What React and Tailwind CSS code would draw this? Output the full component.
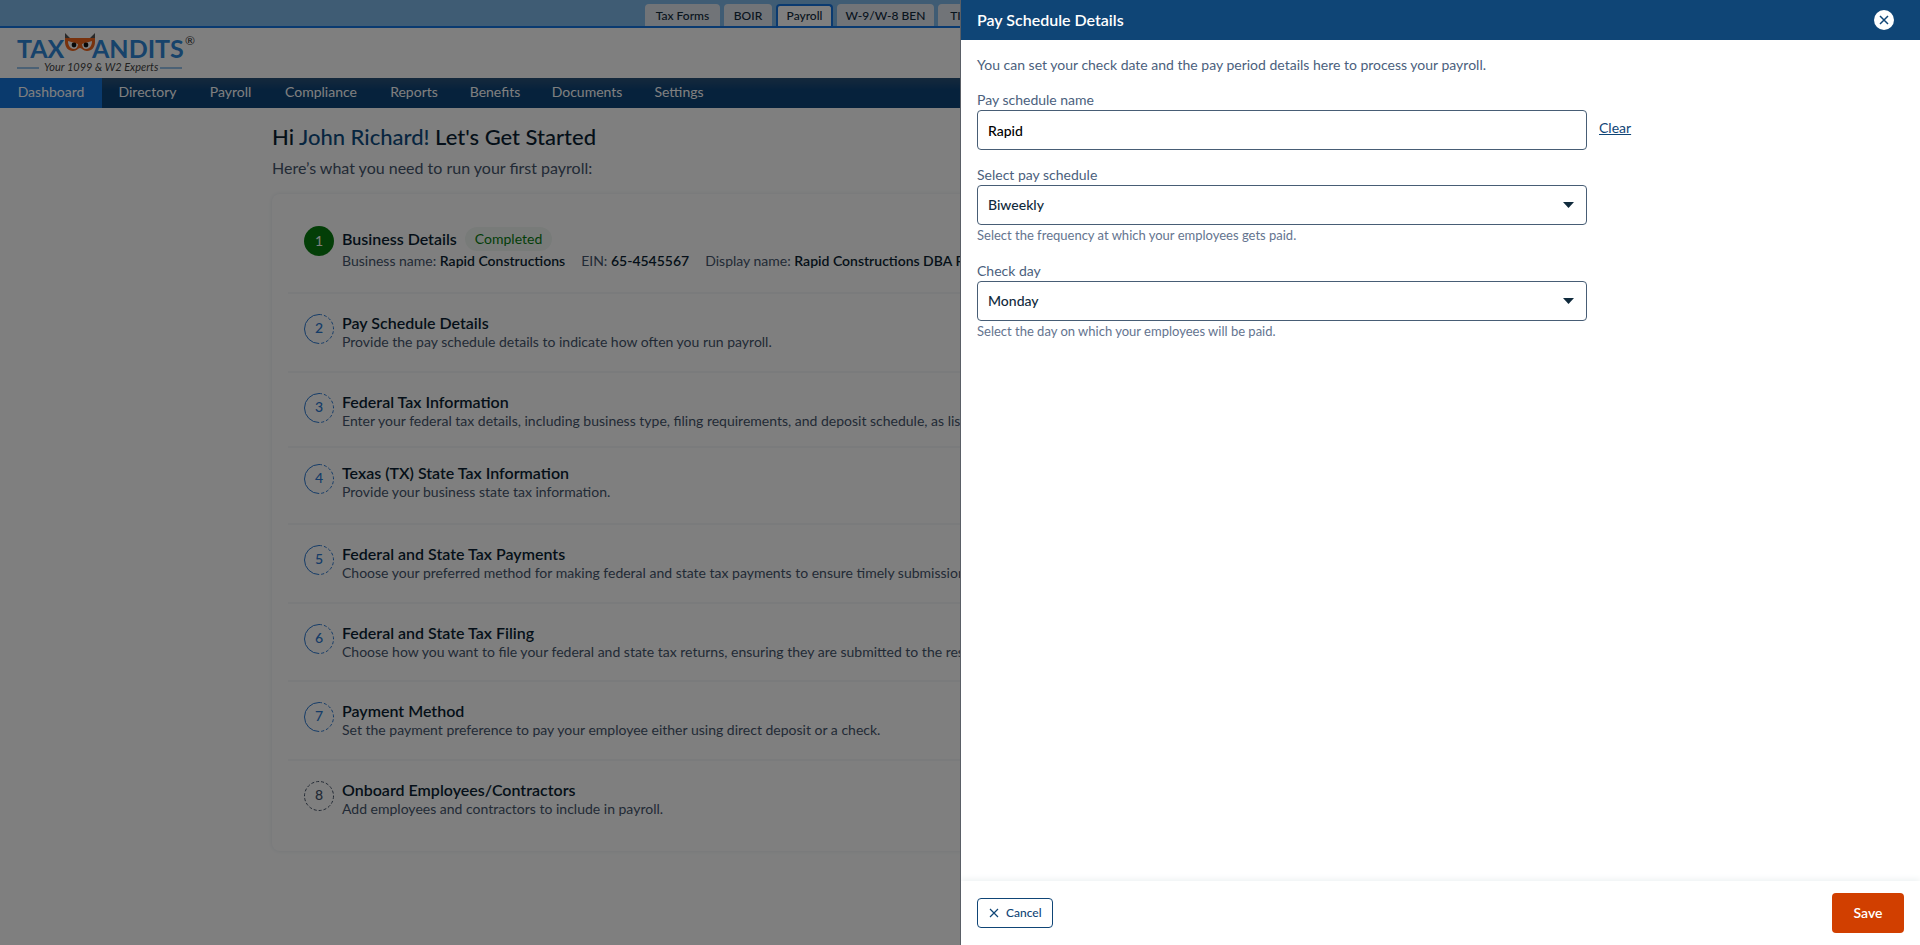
import { useState } from 'react';

const TABS = [
  { name: 'Tax Forms', width: 'w-[75px]' },
  { name: 'BOIR', width: 'w-12' },
  { name: 'Payroll', width: 'w-[57px]', active: true },
  { name: 'W-9/W-8 BEN', width: 'w-[97px]' },
  { name: 'TIN', width: 'w-11' },
];

const NAV = [
  { name: 'Dashboard', width: 'w-[102px]', active: true },
  { name: 'Directory', width: 'w-[91px]' },
  { name: 'Payroll', width: 'w-[75px]' },
  { name: 'Compliance', width: 'w-[106px]' },
  { name: 'Reports', width: 'w-20' },
  { name: 'Benefits', width: 'w-[82px]' },
  { name: 'Documents', width: 'w-[102px]' },
  { name: 'Settings', width: 'w-[82px]' },
];

const STEPS = [
  {
    title: 'Pay Schedule Details',
    text: 'Provide the pay schedule details to indicate how often you run payroll.',
    row: 'h-[79px] pt-5',
  },
  {
    title: 'Federal Tax Information',
    text: 'Enter your federal tax details, including business type, filing requirements, and deposit schedule, as listed',
    row: 'h-[75px] pt-5',
  },
  {
    title: 'Texas (TX) State Tax Information',
    text: 'Provide your business state tax information.',
    row: 'h-[77px] pt-4',
  },
  {
    title: 'Federal and State Tax Payments',
    text: 'Choose your preferred method for making federal and state tax payments to ensure timely submission.',
    row: 'h-[79px] pt-5',
  },
  {
    title: 'Federal and State Tax Filing',
    text: 'Choose how you want to file your federal and state tax returns, ensuring they are submitted to the respective',
    row: 'h-[78px] pt-5',
  },
  {
    title: 'Payment Method',
    text: 'Set the payment preference to pay your employee either using direct deposit or a check.',
    row: 'h-[79px] pt-5',
  },
  {
    title: 'Onboard Employees/Contractors',
    text: 'Add employees and contractors to include in payroll.',
    row: 'h-[90px] pt-5',
    muted: true,
  },
];

function Logo() {
  return (
    <svg width="188" height="44" viewBox="0 0 188 44" role="img" aria-label="TaxBandits">
      <g fill="#2f86d6" fontFamily="Lato, sans-serif" fontWeight="700" fontSize="25">
        <text x="1" y="26">TAX</text>
        <text x="76" y="26">ANDITS</text>
      </g>
      <path d="M49 1l5 5h-5zM79 1l-5 5h5z" fill="#555" />
      <path
        d="M49 6h30v4c0 5-3 9-8 9-4 0-5-3-7-3s-3 3-7 3c-5 0-8-4-8-9z"
        fill="#f0641b"
      />
      <path
        d="M52 9l10 3c0 3-2 5-4 5-4 0-6-4-6-8zM76 9l-10 3c0 3 2 5 4 5 4 0 6-4 6-8z"
        fill="#fff"
      />
      <circle cx="58" cy="13" r="2.4" fill="#111" />
      <circle cx="70" cy="13" r="2.4" fill="#111" />
      <text x="169" y="13" fill="#333" fontFamily="Lato, sans-serif" fontSize="12">®</text>
      <path d="M1 36h22M144 36h22" stroke="#2f86d6" />
      <text x="28" y="39" fill="#444" fontFamily="Lato, sans-serif" fontStyle="italic" fontSize="11">
        Your 1099 &amp; W2 Experts
      </text>
    </svg>
  );
}

function StepCircle({ number, muted }) {
  const color = muted ? '#475569' : '#2b78d0';
  return (
    <div className="relative size-[30px] shrink-0">
      <svg viewBox="0 0 30 30" className="size-full" fill="none" stroke={color}>
        {muted ? (
          <circle cx="15" cy="15" r="14.5" strokeDasharray="3 2" />
        ) : (
          <>
            <path d="M15 29.5a14.5 14.5 0 0 1 0-29" />
            <path d="M15 .5a14.5 14.5 0 0 1 0 29" strokeDasharray="3 2" />
          </>
        )}
      </svg>
      <span
        className={`absolute inset-0 text-center text-sm font-medium leading-7 ${muted ? 'text-slate-600' : 'text-[#2b78d0]'}`}
      >
        {number}
      </span>
    </div>
  );
}

function SelectField({ id, label, help, options }) {
  return (
    <div>
      <label htmlFor={id} className="block text-sm leading-5 text-[#4b5f7d]">
        {label}
      </label>
      <div className="relative">
        <select
          id={id}
          className="block h-10 w-full appearance-none rounded border border-[#475d75] bg-white px-2.5 text-sm font-medium text-[#102a3c]"
        >
          {options.map((o) => (
            <option key={o}>{o}</option>
          ))}
        </select>
        <svg
          viewBox="0 0 11 6"
          className="pointer-events-none absolute right-[13px] top-[17px] h-1.5 w-[11px]"
          fill="#102a3c"
        >
          <path d="M0 0h11L5.5 6z" />
        </svg>
      </div>
      <p className="text-[13px] leading-5 text-[#64748f]">{help}</p>
    </div>
  );
}

function Dashboard() {
  return (
    <div className="bg-white">
      <div className="h-7 overflow-hidden border-b-2 border-[#1574e0] bg-[#7eb8e8]">
        <nav className="ml-[645px] flex h-7 gap-1 pt-1">
          {TABS.map((t) => (
            <a
              key={t.name}
              href="#"
              className={`shrink-0 rounded-t text-center text-xs font-medium text-[#102a3c] ${t.width} ${
                t.active ? 'border-2 border-b-0 border-[#1574e0] bg-white leading-5' : 'h-[22px] bg-[#e3e9f1] leading-6'
              }`}
            >
              {t.name}
            </a>
          ))}
        </nav>
      </div>

      <header className="flex h-[50px] items-start px-4 pt-1">
        <Logo />
      </header>

      <nav className="flex h-[30px] bg-linear-to-b from-[#2a5278] from-0% to-[#0c4478] to-40%">
        {NAV.map((item) => (
          <a
            key={item.name}
            href="#"
            className={`text-center text-sm leading-7 text-white ${item.width} ${item.active ? 'bg-[#1574da]' : ''}`}
          >
            {item.name}
          </a>
        ))}
      </nav>

      <main className="mx-auto max-w-[1376px] pt-[15px]">
        <h1 className="text-[22px] font-medium leading-7 text-[#0b1f33]">
          Hi <span className="text-[#0f4c81]">John Richard!</span> Let's Get Started
        </h1>
        <p className="mt-[5px] text-base leading-6 text-slate-600">
          Here’s what you need to run your first payroll:
        </p>

        <section className="mt-3.5 rounded-lg px-4 shadow-[0_0_5px_#e6ebef]">
          <div className="flex h-[100px] gap-2 border-b-2 border-[#f4f7f9] px-4 pt-8">
            <div className="size-[30px] shrink-0 rounded-full bg-[#077d0f] text-center text-sm leading-[30px] text-white">
              1
            </div>
            <div className="pt-px">
              <div className="flex items-center gap-2">
                <h2 className="text-base font-semibold leading-6 text-[#0b1f33]">Business Details</h2>
                <span className="rounded-full bg-[#f1f7f3] px-2.5 text-sm leading-6 text-[#077d0f]">Completed</span>
              </div>
              <div className="flex gap-4 whitespace-nowrap text-sm leading-5 text-slate-600">
                <p>
                  Business name: <b className="font-semibold text-[#0b1f33]">Rapid Constructions</b>
                </p>
                <p>
                  EIN: <b className="font-semibold text-[#0b1f33]">65-4545567</b>
                </p>
                <p>
                  Display name: <b className="font-semibold text-[#0b1f33]">Rapid Constructions DBA Rapid</b>
                </p>
              </div>
            </div>
          </div>

          {STEPS.map((s, i) => (
            <div
              key={s.title}
              className={`flex gap-2 px-4 ${s.row} ${i < STEPS.length - 1 ? 'border-b-2 border-[#f4f7f9]' : ''}`}
            >
              <StepCircle number={i + 2} muted={s.muted} />
              <div>
                <h2 className="text-base font-semibold leading-[18px] text-[#0b1f33]">{s.title}</h2>
                <p className="text-sm leading-5 text-slate-600">{s.text}</p>
              </div>
            </div>
          ))}
        </section>
      </main>
    </div>
  );
}

function PayScheduleDrawer() {
  const [name, setName] = useState('Rapid');

  return (
    <aside className="flex h-full w-1/2 flex-col overflow-hidden border-l border-[#5a5f66] bg-white">
      <header className="flex h-10 shrink-0 items-center justify-between bg-[#0f4576] pl-4 pr-[26px]">
        <h2 className="text-base font-semibold text-white">Pay Schedule Details</h2>
        <button aria-label="Close" className="size-5 cursor-pointer rounded-full bg-white">
          <svg viewBox="0 0 20 20" className="size-full" stroke="#0f4576" strokeWidth="1.5">
            <path d="M6 6l8 8M14 6l-8 8" />
          </svg>
        </button>
      </header>

      <div className="grow px-4 pt-[15px]">
        <p className="text-sm leading-5 text-[#4b5f7d]">
          You can set your check date and the pay period details here to process your payroll.
        </p>

        <div className="mt-[15px] flex items-start gap-3">
          <div className="w-[610px]">
            <label htmlFor="schedule-name" className="block text-sm leading-5 text-[#4b5f7d]">
              Pay schedule name
            </label>
            <input
              id="schedule-name"
              value={name}
              onChange={(e) => setName(e.target.value)}
              className="block h-10 w-full rounded border border-[#475d75] px-2.5 text-sm font-medium text-black"
            />
          </div>
          <button onClick={() => setName('')} className="mt-7 cursor-pointer text-sm leading-5 text-[#0f4576] underline">
            Clear
          </button>
        </div>

        <div className="mt-[15px] flex w-[610px] flex-col gap-4">
          <SelectField
            id="frequency"
            label="Select pay schedule"
            help="Select the frequency at which your employees gets paid."
            options={['Biweekly', 'Weekly', 'Monthly']}
          />
          <SelectField
            id="check-day"
            label="Check day"
            help="Select the day on which your employees will be paid."
            options={['Monday', 'Tuesday', 'Wednesday', 'Thursday', 'Friday']}
          />
        </div>
      </div>

      <footer className="flex h-16 shrink-0 items-center justify-between px-4 shadow-[0_-2px_6px_#eef2f3]">
        <button className="flex h-[30px] cursor-pointer items-center gap-1.5 rounded border border-[#0f4576] px-2.5 text-xs font-medium text-[#0f4576]">
          <svg viewBox="0 0 12 12" className="size-3" stroke="currentColor" strokeWidth="1.2">
            <path d="M2 2l8 8M10 2l-8 8" />
          </svg>
          Cancel
        </button>
        <button className="h-10 w-[72px] cursor-pointer rounded bg-[#d13f00] text-sm font-semibold text-white">
          Save
        </button>
      </footer>
    </aside>
  );
}

export default function App() {
  return (
    <div className="min-h-screen overflow-hidden bg-white font-['Lato',sans-serif]">
      <Dashboard />
      <div className="fixed inset-0 flex justify-end bg-black/50">
        <PayScheduleDrawer />
      </div>
    </div>
  );
}
